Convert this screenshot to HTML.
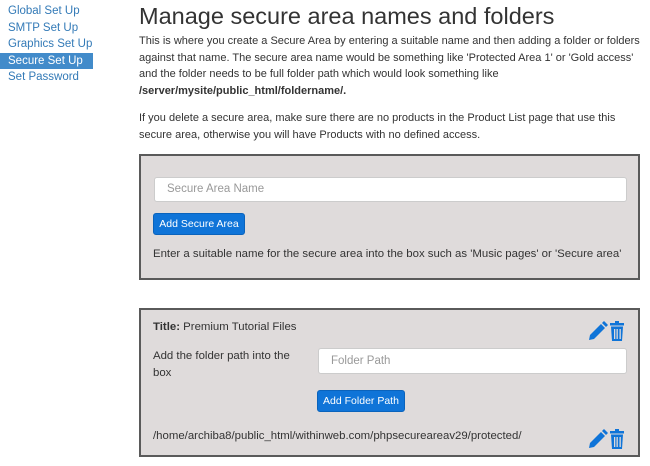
<!DOCTYPE html>
<html><head><style>
body{margin:0;width:650px;height:466px;background:#fff;font-family:"Liberation Sans",sans-serif;color:#333;position:relative;overflow:hidden}
.nav{position:absolute;left:0;top:3px;width:93px;font-size:11.5px}
.nav div{height:16.5px;line-height:16.5px;padding-left:8px;color:#337ab7;white-space:nowrap}
.nav .sel{background:#428bca;color:#fff}
h1{position:absolute;left:139px;top:3px;margin:0;font-size:23.5px;font-weight:normal;color:#333;white-space:nowrap}
p{position:absolute;left:139px;margin:0;font-size:11px;line-height:16.7px;white-space:nowrap}
.panel{position:absolute;left:139px;width:501px;background:#dfdbdb;border:2px solid #5a5a5a;box-sizing:border-box}
.inp{position:absolute;background:#fff;border:1px solid #ccc;border-radius:3px;box-sizing:border-box;font-size:11.5px;color:#999;padding-left:12px;line-height:23px}
.btn{position:absolute;background:#0f74d8;color:#fff;font-size:10.5px;border-radius:3px;text-align:center;line-height:20px;border:1px solid #0a63bc;box-sizing:border-box;white-space:nowrap}
.t{position:absolute;font-size:11.4px;white-space:nowrap;color:#333}
</style></head><body>
<div class="nav"><div>Global Set Up</div><div>SMTP Set Up</div><div>Graphics Set Up</div><div class="sel">Secure Set Up</div><div>Set Password</div></div>
<h1>Manage secure area names and folders</h1>
<p style="top:33px">This is where you create a Secure Area by entering a suitable name and then adding a folder or folders<br>against that name. The secure area name would be something like 'Protected Area 1' or 'Gold access'<br>and the folder needs to be full folder path which would look something like<br><b>/server/mysite/public_html/foldername/.</b></p>
<p style="top:110px">If you delete a secure area, make sure there are no products in the Product List page that use this<br>secure area, otherwise you will have Products with no defined access.</p>
<div class="panel" style="top:154px;height:126px">
<div class="inp" style="left:13px;top:21px;width:473px;height:25px">Secure Area Name</div>
<div class="btn" style="left:12px;top:57px;width:92px;height:22px">Add Secure Area</div>
<div class="t" style="left:12px;top:92px">Enter a suitable name for the secure area into the box such as 'Music pages' or 'Secure area'</div>
</div>
<div class="panel" style="top:308px;height:149px">
<div class="t" style="left:12px;top:11px"><b>Title:</b> Premium Tutorial Files</div>
<div class="t" style="left:12px;top:38px;line-height:17px">Add the folder path into the<br>box</div>
<div class="inp" style="left:177px;top:38px;width:309px;height:26px;line-height:24px">Folder Path</div>
<div class="btn" style="left:176px;top:80px;width:88px;height:22px">Add Folder Path</div>
<div class="t" style="left:12px;top:120px">/home/archiba8/public_html/withinweb.com/phpsecureareav29/protected/</div>
<svg style="position:absolute;left:445px;top:10px" width="42" height="22" viewBox="0 0 42 22"><path d="M3 20 L4 15 L15 4 L19 8 L8 19 Z M16 3 L18 1 L22 5 L20 7 Z" fill="#0f74d8"/><g fill="#0f74d8"><rect x="24" y="3" width="14" height="2.5"/><rect x="29" y="1" width="4" height="2"/><path d="M25 6.5 H37 L36 21 H26 Z"/></g><g fill="#dfdbdb"><rect x="28" y="9" width="1.3" height="10"/><rect x="30.5" y="9" width="1.3" height="10"/><rect x="33.5" y="9" width="1.3" height="10"/></g></svg>
<svg style="position:absolute;left:445px;top:118px" width="42" height="22" viewBox="0 0 42 22"><path d="M3 20 L4 15 L15 4 L19 8 L8 19 Z M16 3 L18 1 L22 5 L20 7 Z" fill="#0f74d8"/><g fill="#0f74d8"><rect x="24" y="3" width="14" height="2.5"/><rect x="29" y="1" width="4" height="2"/><path d="M25 6.5 H37 L36 21 H26 Z"/></g><g fill="#dfdbdb"><rect x="28" y="9" width="1.3" height="10"/><rect x="30.5" y="9" width="1.3" height="10"/><rect x="33.5" y="9" width="1.3" height="10"/></g></svg>
</div>
</body></html>
